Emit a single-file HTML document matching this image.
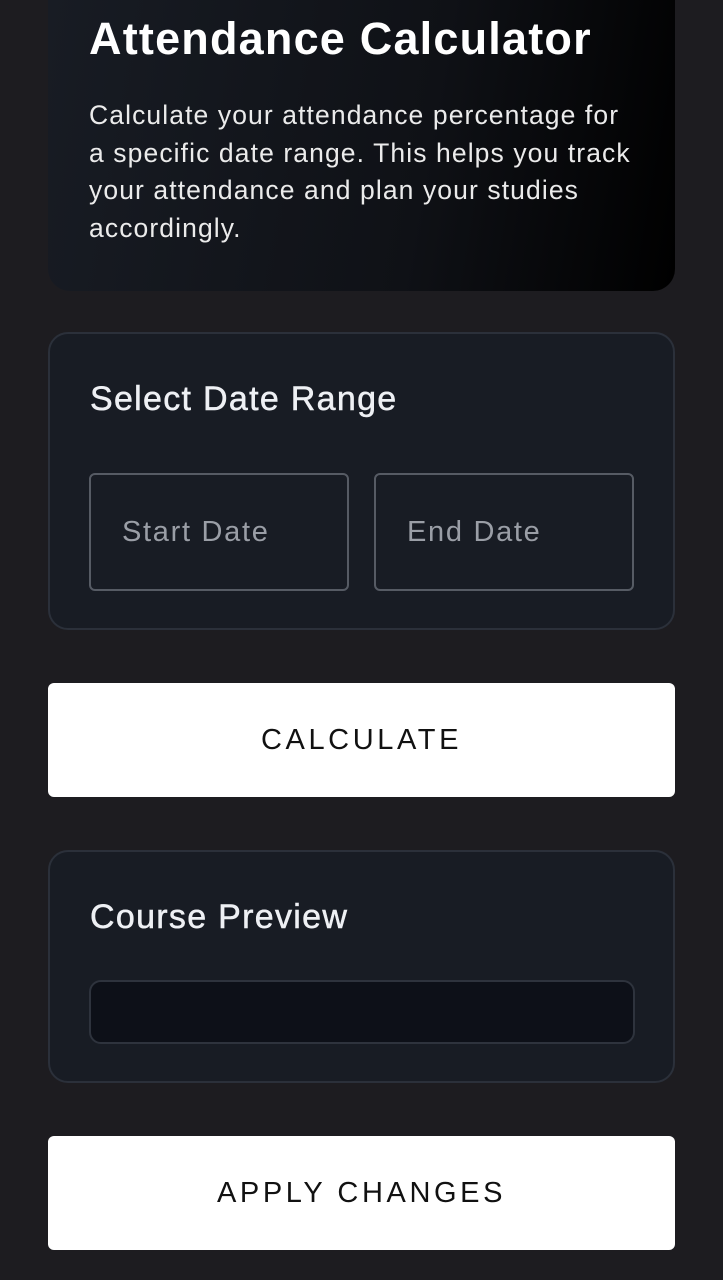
<!DOCTYPE html>
<html><head><meta charset="utf-8"><style>
*{margin:0;padding:0;box-sizing:border-box}
body{width:723px;height:1280px;background:#1d1c20;font-family:"Liberation Sans",sans-serif;position:relative;overflow:hidden}
.hero{position:absolute;left:48px;top:-30px;width:627px;height:321px;border-radius:0 0 22px 22px;background:linear-gradient(100deg,#181c24 0%,#0f1116 60%,#000 100%)}
.hero h1{position:absolute;left:41px;top:43px;color:#fff;font-size:45px;font-weight:bold;letter-spacing:1.2px;white-space:nowrap}
.hero p{position:absolute;left:41px;top:127px;width:600px;color:#ebebeb;font-size:26.5px;line-height:37.5px;letter-spacing:1.1px;white-space:nowrap}
.card{position:absolute;left:48px;width:627px;background:#181c24;border:2px solid #2b303a;border-radius:20px}
.card h2{position:absolute;left:40px;color:#eef0f4;font-size:34px;font-weight:normal;letter-spacing:1.3px;-webkit-text-stroke:0.5px #eef0f4}
.inp{position:absolute;top:139px;width:260px;height:118px;border:2px solid #565b64;border-radius:6px;color:#9a9ea6;font-size:29px;letter-spacing:1.7px;padding:41px 0 0 31px}
.btn{position:absolute;left:48px;width:627px;height:114px;background:#fff;border-radius:6px;text-align:center;color:#111;font-size:29px;letter-spacing:3.6px;line-height:114px}
</style></head><body>
<div class="hero"><h1>Attendance Calculator</h1><p>Calculate your attendance percentage for<br>a specific date range. This helps you track<br>your attendance and plan your studies<br>accordingly.</p></div>
<div class="card" style="top:332px;height:298px"><h2 style="top:46px">Select Date Range</h2>
<div class="inp" style="left:39px">Start Date</div><div class="inp" style="left:324px">End Date</div></div>
<div class="btn" style="top:683px">CALCULATE</div>
<div class="card" style="top:850px;height:233px"><h2 style="top:46px">Course Preview</h2>
<div style="position:absolute;left:39px;top:128px;width:546px;height:64px;background:#0d1018;border:2px solid #2e333d;border-radius:12px"></div></div>
<div class="btn" style="top:1136px">APPLY CHANGES</div>
</body></html>
